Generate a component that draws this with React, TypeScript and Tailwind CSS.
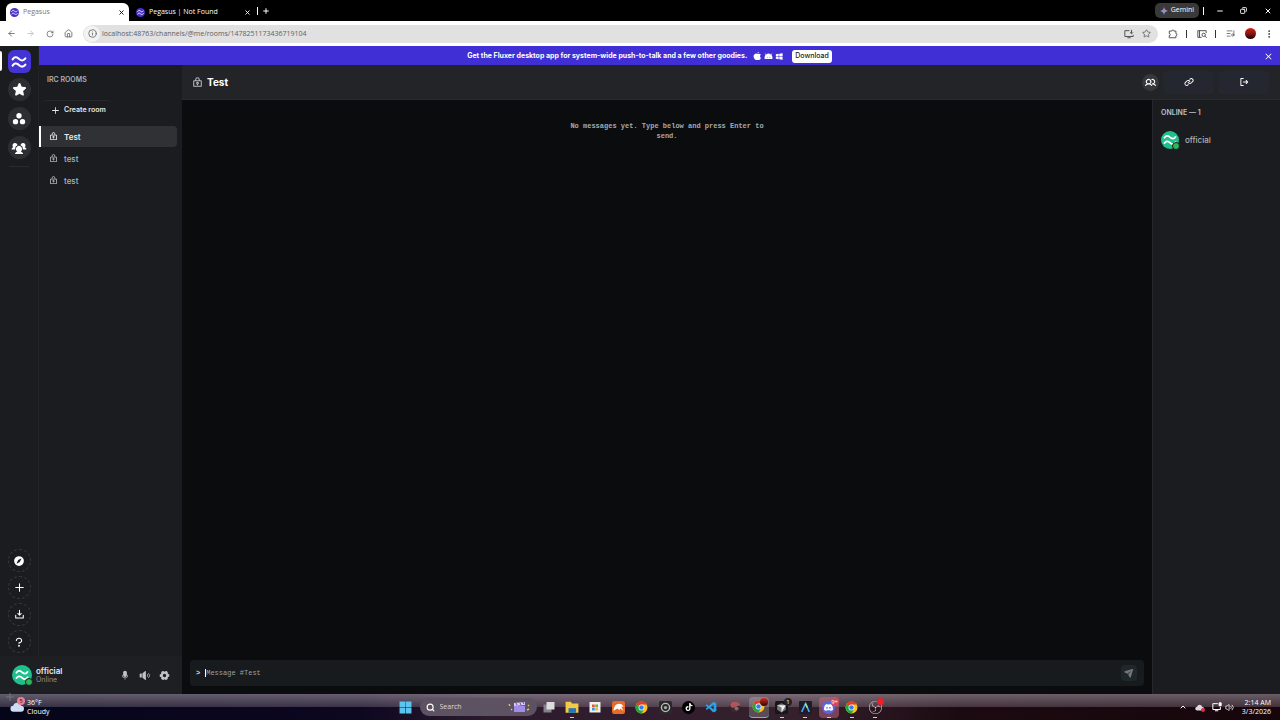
import { useState } from "react";
import type { ReactNode } from "react";
import {
  PiAndroidLogoFill,
  PiAppleLogoFill,
  PiCompassFill,
  PiDownloadSimpleBold,
  PiGearSixFill,
  PiLinkBold,
  PiLockKeyBold,
  PiMicrophoneFill,
  PiPaperPlaneTiltFill,
  PiPlusBold,
  PiQuestionMarkBold,
  PiSignOutBold,
  PiSpeakerHighFill,
  PiStarFill,
  PiUsersBold,
  PiUsersThreeFill,
  PiWindowsLogoFill,
  PiXBold,
} from "react-icons/pi";
import {
  ArrowLeft,
  ArrowRight,
  ChevronUp,
  Copy,
  EllipsisVertical,
  House,
  Info,
  ListMusic,
  Minus,
  Plus,
  RotateCw,
  Search,
  Star,
  Volume2,
  X,
} from "lucide-react";
import { SiDiscord, SiObsstudio, SiTiktok } from "react-icons/si";
import { VscVscode } from "react-icons/vsc";

const rooms = [
  { id: 1, name: "Test" },
  { id: 2, name: "test" },
  { id: 3, name: "test" },
];

function Waves({ className }: { className?: string }) {
  return (
    <svg viewBox="0 0 16 16" className={className} fill="none" stroke="currentColor" strokeWidth="2" strokeLinecap="round" strokeLinejoin="round">
      <path d="M1.6 5.4C3.2 3 5.2 2.6 7.2 4.2L8.8 5.5C10.8 7 12.8 6.7 14.4 4.4" />
      <path d="M1.6 11.6C3.2 9.2 5.2 8.8 7.2 10.4L8.8 11.7C10.8 13.2 12.8 12.9 14.4 10.6" />
    </svg>
  );
}

function Avatar({ small = false }: { small?: boolean }) {
  return (
    <span
      className={
        small
          ? "relative flex size-[18px] shrink-0 items-center justify-center rounded-full bg-[#20c08c] text-white"
          : "relative flex size-5 shrink-0 items-center justify-center rounded-full bg-[#20c08c] text-white"
      }
    >
      <Waves className="size-3.5" />
      <span className="absolute -right-px -bottom-px size-2 rounded-full border border-[#1c1d21] bg-[#2fb757]" />
    </span>
  );
}

function TabLogo() {
  return (
    <span className="flex size-[9px] items-center justify-center rounded-full bg-[#4632c8] text-white">
      <Waves className="size-[7px]" />
    </span>
  );
}

function ChromeLogo({ className }: { className?: string }) {
  return (
    <svg viewBox="0 0 24 24" className={className}>
      <circle cx="12" cy="12" r="11" fill="#fbc116" />
      <path d="M12 12 2.5 6.5A11 11 0 0 1 21.5 6.5H12Z" fill="#e33b2e" />
      <path d="M2.5 6.5A11 11 0 0 0 12 23L16.8 14.8 12 12Z" fill="#26a344" />
      <circle cx="12" cy="12" r="5.4" fill="#fff" />
      <circle cx="12" cy="12" r="4.2" fill="#3a7be8" />
    </svg>
  );
}

function InstallIcon() {
  return (
    <svg viewBox="0 0 24 24" className="size-[10px]" fill="none" stroke="currentColor" strokeWidth="2.4">
      <path d="M13 4H2v14h20v-4M8 21h8M18 2v9M14.500 8l3.500 3.500L21.500 8" />
    </svg>
  );
}

function ExtensionsIcon() {
  return (
    <svg viewBox="0 0 24 24" className="size-[10px]" fill="none" stroke="currentColor" strokeWidth="2.4" strokeLinejoin="round">
      <path d="M3 5h6a2.500 2.500 0 0 1 5 0h5v6a2.500 2.500 0 0 1 0 5v5H3v-5a2.500 2.500 0 0 0 0-5Z" />
    </svg>
  );
}

function ReaderIcon() {
  return (
    <svg viewBox="0 0 24 24" className="size-[10px]" fill="none" stroke="currentColor" strokeWidth="2.4">
      <path d="M11 20H2V4h20v6M6 4v16" />
      <circle cx="16" cy="14" r="4" />
      <path d="m19 17 4 4" />
    </svg>
  );
}

function BrowserTabs() {
  return (
    <div className="flex h-[21px] items-end bg-black pl-[6px]">
      <div className="flex h-[18px] w-[123px] items-center rounded-t-md bg-white px-1 text-[#777]">
        <TabLogo />
        <span className="ml-1 flex-1 text-[7px]">Pegasus</span>
        <button aria-label="Close Pegasus" className="text-black">
          <X className="size-[7px]" strokeWidth={3} />
        </button>
      </div>
      <div className="flex h-[18px] w-[126px] items-center pr-1 pl-[7px] text-white">
        <TabLogo />
        <span className="ml-1 flex-1 text-[7px]">Pegasus | Not Found</span>
        <button aria-label="Close Not Found">
          <X className="size-[7px]" strokeWidth={3} />
        </button>
      </div>
      <div className="flex h-[21px] flex-1 items-center text-white">
        <span className="ml-[2px] h-2 w-px bg-white" />
        <button aria-label="New tab" className="ml-1">
          <Plus className="size-2" strokeWidth={3} />
        </button>
        <button className="ml-auto flex h-[15px] items-center gap-[3px] rounded-[5px] bg-[#393939] px-[5px] text-[7px]">
          <svg viewBox="0 0 16 16" className="size-2">
            <path d="M8 0c.6 4.6 3.4 7.4 8 8-4.6.6-7.4 3.4-8 8-.6-4.6-3.4-7.4-8-8 4.600-.6 7.400-3.400 8-8" fill="#6fa0ee" />
            <path d="M8 0c.6 4.6 3.4 7.4 8 8H8Z" fill="#c9798c" />
          </svg>
          <span>Gemini</span>
        </button>
        <span className="ml-1 h-2 w-px bg-white" />
        <button aria-label="Minimize" className="ml-3">
          <Minus className="size-2" strokeWidth={3} />
        </button>
        <button aria-label="Restore" className="ml-4">
          <Copy className="size-[7px] -scale-x-100" strokeWidth={3} />
        </button>
        <button aria-label="Close window" className="mr-2 ml-[17px]">
          <X className="size-2" strokeWidth={3} />
        </button>
      </div>
    </div>
  );
}

function BrowserToolbar() {
  return (
    <div className="flex h-[25px] items-center bg-white pr-[6px] pl-[7px] text-[#555]">
      <div className="flex w-[76px] items-center justify-between pr-[10px]">
        <button aria-label="Back"><ArrowLeft className="size-[9px]" /></button>
        <button aria-label="Forward" className="text-[#b5b5b5]"><ArrowRight className="size-[9px]" /></button>
        <button aria-label="Reload"><RotateCw className="size-2" /></button>
        <button aria-label="Home"><House className="size-[9px]" /></button>
      </div>
      <div className="flex h-[18px] flex-1 items-center rounded-full bg-[#e1e1e1] pr-[7px] pl-px">
        <span className="flex size-4 items-center justify-center rounded-full bg-[#f3f3f3]">
          <Info className="size-[9px]" />
        </span>
        <input
          aria-label="Address"
          defaultValue="localhost:48763/channels/@me/rooms/1478251173436719104"
          className="ml-[2px] h-4 flex-1 bg-transparent text-[7px] text-[#606060] outline-none"
        />
        <button aria-label="Install app"><InstallIcon /></button>
        <button aria-label="Bookmark" className="ml-2"><Star className="size-[9px]" /></button>
      </div>
      <button aria-label="Extensions" className="ml-[10px]"><ExtensionsIcon /></button>
      <span className="ml-2 h-2 w-px bg-[#333]" />
      <button aria-label="Reader" className="ml-[10px]"><ReaderIcon /></button>
      <span className="ml-2 h-2 w-px bg-[#333]" />
      <button aria-label="Media" className="ml-[10px]"><ListMusic className="size-[9px]" /></button>
      <button aria-label="Profile" className="ml-[10px] size-[11px] rounded-full bg-linear-to-b from-[#d21e15] via-[#8c1410] to-[#180505]" />
      <button aria-label="Browser menu" className="ml-2 text-[#333]"><EllipsisVertical className="size-[10px]" /></button>
    </div>
  );
}

function RailButton({ label, children }: { label: string; children: ReactNode }) {
  return (
    <button aria-label={label} className="flex size-[23px] items-center justify-center rounded-full bg-[#2d2e32] text-white">
      {children}
    </button>
  );
}

function RailAction({ label, children }: { label: string; children: ReactNode }) {
  return (
    <button aria-label={label} className="flex size-[23px] items-center justify-center rounded-full border border-dashed border-[#36373b] text-white">
      {children}
    </button>
  );
}

function Rail() {
  return (
    <nav className="relative flex w-[39px] shrink-0 flex-col items-center border-r border-[#222327] pt-[4px] pb-[3px]">
      <span className="absolute top-[5px] left-0 h-5 w-[2px] rounded-r bg-white" />
      <button aria-label="Home" className="flex size-[23px] items-center justify-center rounded-md bg-[#4534d4] text-white">
        <Waves className="size-4" />
      </button>
      <div className="mt-[5px] flex flex-col gap-[6px]">
        <RailButton label="Favorites"><PiStarFill className="size-[15px]" /></RailButton>
        <RailButton label="Communities">
          <svg viewBox="0 0 24 24" className="size-3.5" fill="currentColor">
            <circle cx="12" cy="6.5" r="4.6" />
            <circle cx="6" cy="16.5" r="4.6" />
            <circle cx="18" cy="16.5" r="4.6" />
          </svg>
        </RailButton>
        <RailButton label="Groups"><PiUsersThreeFill className="size-4" /></RailButton>
      </div>
      <span className="mt-[7px] h-px w-5 bg-[#292a2e]" />
      <div className="mt-auto flex flex-col gap-1">
        <RailAction label="Explore"><PiCompassFill className="size-3" /></RailAction>
        <RailAction label="Add"><PiPlusBold className="size-[11px]" /></RailAction>
        <RailAction label="Downloads"><PiDownloadSimpleBold className="size-[11px]" /></RailAction>
        <RailAction label="Help"><PiQuestionMarkBold className="size-3" /></RailAction>
      </div>
    </nav>
  );
}

function UserPanel() {
  return (
    <div className="flex h-[38px] shrink-0 items-center bg-[#1e1f22] pr-3 pl-3">
      <Avatar />
      <div className="ml-1 flex-1">
        <p className="text-[8px] leading-[10px] font-semibold text-[#ececef]">official</p>
        <p className="text-[7px] leading-[8px] text-[#8f9095]">Online</p>
      </div>
      <div className="flex items-center gap-[9px] text-[#c3c4c8]">
        <button aria-label="Mute"><PiMicrophoneFill className="size-[10px]" /></button>
        <button aria-label="Deafen"><PiSpeakerHighFill className="size-[11px]" /></button>
        <button aria-label="Settings"><PiGearSixFill className="size-[11px]" /></button>
      </div>
    </div>
  );
}

function RoomList({ active, onSelect }: { active: number; onSelect: (id: number) => void }) {
  return (
    <aside className="flex w-[143px] shrink-0 flex-col">
      <h2 className="mt-[28px] px-2 text-[7px] leading-[12px] font-semibold text-[#aeb0b5]">IRC ROOMS</h2>
      <button className="mt-[14px] ml-1 flex h-5 w-[68px] items-center gap-1 rounded-sm border-t border-[#28292d] pl-2 text-[7px] font-semibold text-[#e6e6e8]">
        <PiPlusBold className="size-[9px]" />
        Create room
      </button>
      <ul className="mt-[6px] pr-[5px]">
        {rooms.map((room) => (
          <li key={room.id} className="mb-px">
            <button
              onClick={() => onSelect(room.id)}
              className={
                room.id === active
                  ? "flex h-[21px] w-full items-center gap-[6px] rounded-r-sm border-l-2 border-white bg-[#303135] pl-2 text-[8px] font-semibold text-[#e8e8ea]"
                  : "flex h-[21px] w-full items-center gap-[6px] border-l-2 border-transparent pl-2 text-[8px] font-medium text-[#b2b3b8]"
              }
            >
              <PiLockKeyBold className="size-[9px]" />
              {room.name}
            </button>
          </li>
        ))}
      </ul>
    </aside>
  );
}

function Banner({ onClose }: { onClose: () => void }) {
  return (
    <div className="relative -ml-[143px] flex h-[19px] shrink-0 items-center justify-center bg-[#402fd4] pt-px pr-5 text-white">
      <p className="text-[7px] font-bold">
        Get the Fluxer desktop app for system-wide push-to-talk and a few other goodies.
      </p>
      <div className="ml-[6px] flex gap-[2px]">
        <PiAppleLogoFill className="size-[9px]" />
        <PiAndroidLogoFill className="size-[9px]" />
        <PiWindowsLogoFill className="size-[9px]" />
      </div>
      <button className="ml-2 h-[13px] rounded-[3px] bg-white px-[3px] text-[7px] font-medium text-[#222]">Download</button>
      <button aria-label="Dismiss" onClick={onClose} className="absolute right-[7px]"><PiXBold className="size-[9px]" /></button>
    </div>
  );
}

function ChatPane({ room }: { room: string }) {
  const [showBanner, setShowBanner] = useState(true);
  const [message, setMessage] = useState("");

  return (
    <main className="flex min-w-0 flex-1 flex-col">
      {showBanner && <Banner onClose={() => setShowBanner(false)} />}
      <header className="flex h-[35px] shrink-0 items-center border-b border-[#2a2b2f] bg-[#232428] pr-[11px] pl-[10px] text-white">
        <PiLockKeyBold className="size-[11px] text-[#b8b9bd]" />
        <h1 className="ml-1 text-[10px] font-bold">{room}</h1>
        <div className="ml-auto flex items-center gap-1">
          <button aria-label="Members" className="flex size-[17px] items-center justify-center rounded-full bg-[#36373b]">
            <PiUsersBold className="size-[11px]" />
          </button>
          <button aria-label="Copy link" className="flex h-[23px] w-[51px] items-center justify-center rounded bg-[#24272f]">
            <PiLinkBold className="size-[10px]" />
          </button>
          <button aria-label="Leave room" className="flex h-[23px] w-[51px] items-center justify-center rounded bg-[#24272f]">
            <PiSignOutBold className="size-[10px]" />
          </button>
        </div>
      </header>
      <div className="flex min-h-0 flex-1">
        <section className="flex min-w-0 flex-1 flex-col bg-[#0b0c0e] px-2 pb-2 font-['Liberation_Mono',monospace] text-[7px]">
          <p className="mx-auto mt-[21px] w-[200px] text-center leading-[10px] font-bold text-[#a8a9ad]">
            No messages yet. Type below and press Enter to send.
          </p>
          <div className="mt-auto flex h-[26px] items-center rounded-sm bg-[#181b1e] pr-[7px] pl-[6px]">
            <label htmlFor="message" className="font-bold text-[#dcdcdf]">&gt;</label>
            <span className="ml-[5px] h-2 w-px bg-white" />
            <input
              id="message"
              value={message}
              onChange={(e) => setMessage(e.target.value)}
              placeholder={`Message #${room}`}
              className="min-w-0 flex-1 bg-transparent text-[#e0e0e3] outline-none placeholder:text-[#9c9ea3]"
            />
            <button aria-label="Send" className="flex size-4 items-center justify-center rounded-sm bg-[#20272a] text-[#75777c]">
              <PiPaperPlaneTiltFill className="size-[10px]" />
            </button>
          </div>
        </section>
        <aside className="w-32 shrink-0 border-l border-[#26272b] px-2">
          <h2 className="mt-[8px] text-[7px] leading-[10px] font-semibold text-[#c0c1c5]">ONLINE — 1</h2>
          <div className="mt-[13px] flex items-center gap-[6px] text-[8px] font-medium text-[#b3b4b9]">
            <Avatar small />
            <span>official</span>
          </div>
        </aside>
      </div>
    </main>
  );
}

function TaskApp({ label, state = "idle", children }: { label: string; state?: "idle" | "open" | "active" | "alert"; children: ReactNode }) {
  return (
    <button
      aria-label={label}
      className={
        state === "active"
          ? "relative flex h-[21px] w-5 items-center justify-center rounded-sm border-b border-[#54c5dd] bg-white/20"
          : state === "alert"
            ? "relative flex h-[21px] w-5 items-center justify-center rounded-sm bg-[#c66b86]/50"
            : "relative flex h-[21px] w-5 items-center justify-center"
      }
    >
      {children}
      {(state === "open" || state === "alert") && <span className="absolute bottom-0 h-px w-1 bg-[#d5d0d5]" />}
    </button>
  );
}

function Taskbar() {
  return (
    <footer className="flex h-[26px] shrink-0 items-center bg-[linear-gradient(to_bottom,rgba(190,180,190,0.5),rgba(150,135,150,0.35)_48%,transparent_52%),linear-gradient(to_right,#05051a,#0d0720_28%,#2c1a2e_38%,#35202c_62%,#1c0a10_75%,#16060b)] text-white">
      <div className="flex flex-1 items-center pl-[10px]">
        <span className="relative flex size-[14px] items-center">
          <Plus className="absolute -top-[9px] -left-[6px] size-3 text-[#77747b]" />
          <svg viewBox="0 0 24 24" className="relative size-[14px]">
            <path d="M6 20a5 5 0 0 1-.5-10A7 7 0 0 1 19 10a5 5 0 0 1 0 10Z" fill="#cfdcf6" />
          </svg>
          <span className="absolute -top-[3px] -right-px flex size-2 items-center justify-center rounded-full bg-[#ee7d92] text-[6px] leading-none text-[#2a1018]">5</span>
        </span>
        <div className="ml-[3px] text-[7px] leading-[9px]">
          <p>36°F</p>
          <p>Cloudy</p>
        </div>
      </div>
      <div className="flex shrink-0 items-center">
        <button aria-label="Start" className="mr-1 flex size-5 items-center justify-center">
          <svg viewBox="0 0 24 24" className="size-[13px]" fill="#5cc5ee">
            <path d="M1 1h10.500v10.500H1zM12.500 1H23v10.500H12.500zM1 12.500h10.500V23H1zM12.500 12.500H23V23H12.500z" />
          </svg>
        </button>
        <label className="flex h-[18px] w-[117px] items-center rounded-full bg-[#5c5261] px-[6px]">
          <Search className="size-[9px]" strokeWidth={3} />
          <input aria-label="Search" placeholder="Search" className="ml-[5px] min-w-0 flex-1 bg-transparent text-[7px] outline-none placeholder:text-[#dcd8de]" />
          <svg viewBox="0 0 24 12" className="h-3 w-6">
            <path d="M7 5h11v6H7z" fill="#a58be8" />
            <path d="m7 2 11-1v3L7 5z" fill="#d9ccff" />
            <path d="m9 2 1 2m3-2 1 2m2-3 1 2" stroke="#66509d" />
            <path d="m2 3 1 2M4 8l1 1M21 4l1 1M20 9l2-1" stroke="#e6bd4a" strokeWidth="1.5" />
          </svg>
        </label>
        <div className="ml-[2px] flex w-[347px] justify-between">
          <TaskApp label="Task view">
            <svg viewBox="0 0 24 24" className="size-3"><path d="M1 7h16v16H1z" fill="#838189" /><path d="M7 2h16v15H7z" fill="#deddde" /></svg>
          </TaskApp>
          <TaskApp label="File Explorer" state="open">
            <svg viewBox="0 0 24 24" className="size-3.5"><path d="M1 3h9l2 3h11v16H1z" fill="#f4ca45" /><path d="M6 14h13v8H6z" fill="#2777ba" /></svg>
          </TaskApp>
          <TaskApp label="Store">
            <svg viewBox="0 0 24 24" className="size-3">
              <path d="M1 2h22v21H1z" fill="#f1f1ee" />
              <path d="M6 7h5.500v5.500H6z" fill="#e35b39" /><path d="M12.500 7H18v5.500h-5.500z" fill="#74ae3d" />
              <path d="M6 13.500h5.500V19H6z" fill="#369be0" /><path d="M12.500 13.500H18V19h-5.500z" fill="#edb835" />
            </svg>
          </TaskApp>
          <TaskApp label="Crunch">
            <svg viewBox="0 0 24 24" className="size-[13px]"><rect width="24" height="24" rx="4" fill="#e96b25" /><path d="M3 18c0-7 4-13 10-13 4 0 7 2 8 6l-4-1 4 8-6-4-1 3-4-3z" fill="#fff" /></svg>
          </TaskApp>
          <TaskApp label="Chrome"><ChromeLogo className="size-[13px]" /></TaskApp>
          <TaskApp label="Camera">
            <svg viewBox="0 0 24 24" className="size-[13px]"><rect width="24" height="24" rx="3" fill="#29292b" /><circle cx="12" cy="12" r="7.5" fill="none" stroke="#bcbcbc" strokeWidth="2.5" /><circle cx="12" cy="12" r="3" fill="#aaa" /></svg>
          </TaskApp>
          <TaskApp label="TikTok">
            <span className="flex size-[13px] items-center justify-center rounded-full bg-black"><SiTiktok className="size-2" /></span>
          </TaskApp>
          <TaskApp label="VS Code"><VscVscode className="size-[13px] text-[#2aa0e6]" /></TaskApp>
          <TaskApp label="Orb">
            <svg viewBox="0 0 24 24" className="size-3"><circle cx="12" cy="12" r="11" fill="#38272e" /><path d="M2 8A11 11 0 0 1 23 10c-7-3-11 5-18 3z" fill="#b2545c" /><circle cx="15" cy="15" r="4" fill="#876871" /></svg>
          </TaskApp>
          <TaskApp label="Chrome window" state="active">
            <ChromeLogo className="size-[13px]" />
            <span className="absolute top-px right-px size-2 rounded-full bg-linear-to-b from-[#d92820] to-[#2a0a0a]" />
          </TaskApp>
          <TaskApp label="Cursor" state="open">
            <svg viewBox="0 0 24 24" className="size-[13px]"><rect width="24" height="24" rx="3" fill="#161616" /><path d="m12 4 8 4v8l-8 5-8-5V8z" fill="#777" /><path d="M4 8h16l-8 13v-9z" fill="#f0f0f0" /></svg>
            <span className="absolute top-px right-0 flex size-2 items-center justify-center rounded-full bg-[#252127] text-[6px] leading-none">1</span>
          </TaskApp>
          <TaskApp label="Editor" state="open">
            <svg viewBox="0 0 24 24" className="size-[13px]"><rect width="24" height="24" rx="2" fill="#1b1d2b" /><path d="M5 20 12 5l7 15" fill="none" stroke="#51a5ed" strokeWidth="3" /><path d="m12 5 3.5 7.5" stroke="#b7d982" strokeWidth="3" /></svg>
          </TaskApp>
          <TaskApp label="Discord" state="alert">
            <span className="flex size-[13px] items-center justify-center rounded-full bg-[#5865e8]"><SiDiscord className="size-[9px]" /></span>
            <span className="absolute top-px right-0 flex size-2 items-center justify-center rounded-full bg-[#d84460] text-[6px] leading-none">9+</span>
          </TaskApp>
          <TaskApp label="Chrome profile" state="open"><ChromeLogo className="size-[13px]" /></TaskApp>
          <TaskApp label="OBS Studio" state="open">
            <SiObsstudio className="size-[13px] text-[#d5d0d2]" />
            <span className="absolute top-px right-px size-[7px] rounded-full bg-[#ed2027]" />
          </TaskApp>
        </div>
      </div>
      <div className="flex flex-1 items-center justify-end pr-[9px]">
        <button aria-label="Hidden icons"><ChevronUp className="size-2" strokeWidth={3} /></button>
        <span className="relative ml-2">
          <svg viewBox="0 0 24 24" className="size-[9px]"><path d="M6 20a5 5 0 0 1-.5-10A7 7 0 0 1 19 10a5 5 0 0 1 0 10Z" fill="#ded9dc" /></svg>
          <span className="absolute -right-px bottom-0 size-1 rounded-full bg-[#dc2c4c]" />
        </span>
        <svg viewBox="0 0 24 24" className="ml-2 size-[10px]" fill="none" stroke="currentColor" strokeWidth="2.4">
          <path d="M14 4H2v14h18v-6M7 21h8" />
          <path d="M17 2h5v7h-5z" fill="currentColor" />
        </svg>
        <Volume2 className="ml-[3px] size-[9px]" />
        <div className="ml-2 text-right text-[7px] leading-[9px]">
          <p>2:14 AM</p>
          <p>3/3/2026</p>
        </div>
      </div>
    </footer>
  );
}

export default function App() {
  const [active, setActive] = useState(1);
  const room = rooms.find((r) => r.id === active) ?? rooms[0];

  return (
    <div className="flex h-screen flex-col overflow-hidden bg-[#1b1c20] font-['Open_Sans',sans-serif]">
      <BrowserTabs />
      <BrowserToolbar />
      <div className="flex min-h-0 flex-1 font-['Inter',sans-serif]">
        <div className="flex shrink-0 flex-col">
          <div className="flex min-h-0 flex-1">
            <Rail />
            <RoomList active={active} onSelect={setActive} />
          </div>
          <UserPanel />
        </div>
        <ChatPane room={room.name} />
      </div>
      <Taskbar />
    </div>
  );
}
